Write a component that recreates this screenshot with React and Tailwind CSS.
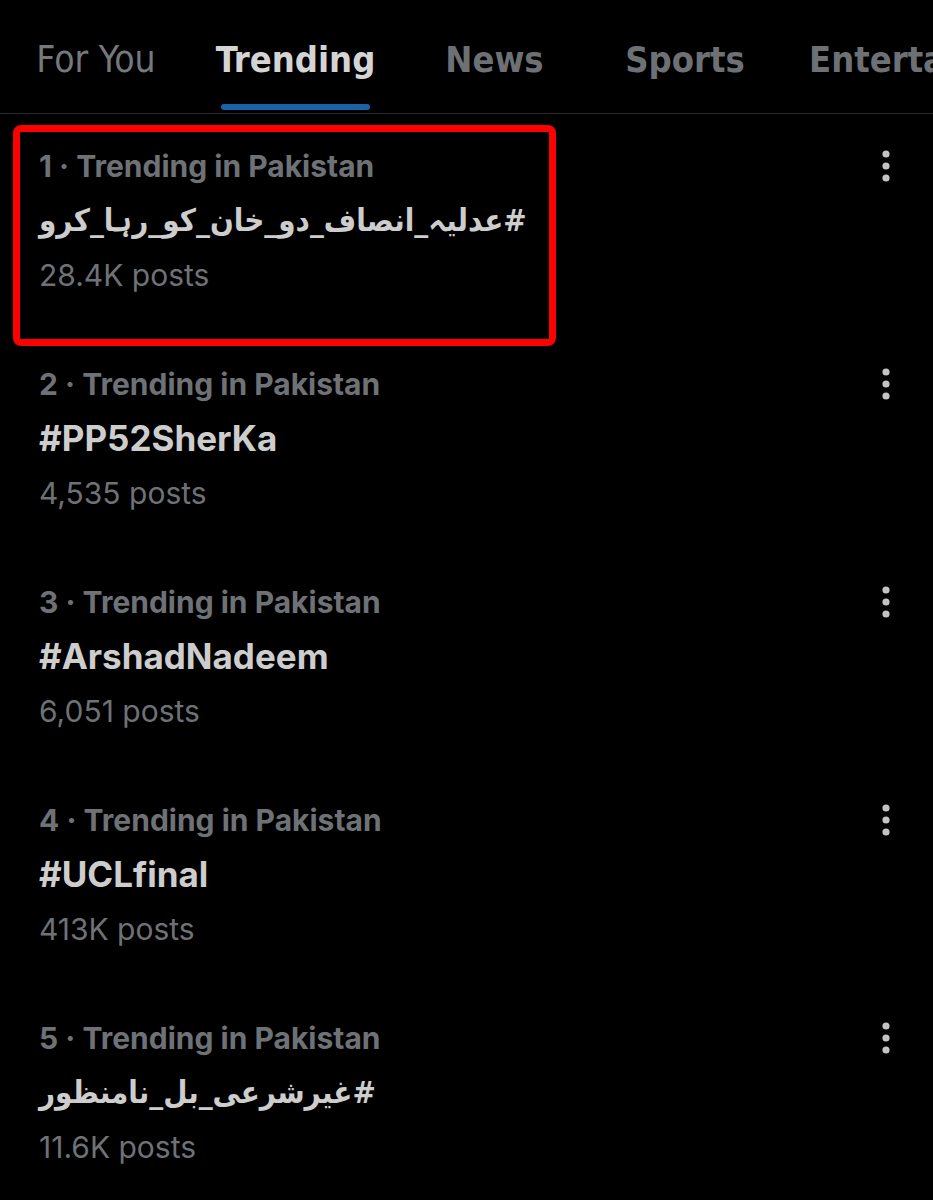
import React from "react";

const rows = [
  { n: 1, tag: "#عدلیہ_انصاف_دو_خان_کو_رہا_کرو", rtl: true, posts: "28.4K posts", boxed: true },
  { n: 2, tag: "#PP52SherKa", posts: "4,535 posts" },
  { n: 3, tag: "#ArshadNadeem", posts: "6,051 posts" },
  { n: 4, tag: "#UCLfinal", posts: "413K posts" },
  { n: 5, tag: "#غیرشرعی_بل_نامنظور", rtl: true, posts: "11.6K posts" },
];

function Dots() {
  return (
    <svg width="14" height="34" viewBox="0 0 14 34" className="text-[#c4c4c4]">
      <circle cx="7" cy="5" r="3.6" fill="currentColor" />
      <circle cx="7" cy="17" r="3.6" fill="currentColor" />
      <circle cx="7" cy="29" r="3.6" fill="currentColor" />
    </svg>
  );
}

export default function App() {
  const condensed = { fontFamily: '"Liberation Sans Narrow", "DejaVu Sans Condensed", "Roboto", sans-serif' };
  return (
    <div className="w-[933px] h-[1200px] bg-black overflow-hidden" style={{ fontFamily: 'Inter, "DejaVu Sans", sans-serif' }}>
      <div className="h-[114px] border-b border-[#2a2d30] flex items-stretch whitespace-nowrap overflow-hidden">
        <div className="w-[192px] shrink-0 flex justify-center pt-[40px] text-[37px] leading-[40px] text-[#75787c]" style={condensed}>For You</div>
        <div className="w-[207px] shrink-0 flex flex-col items-center pt-[40px] text-[36px] leading-[40px] font-bold text-[#d4d4d4]" style={condensed}>
          <span>Trending</span>
          <div className="mt-[24px] w-[149px] h-[6px] rounded-full bg-[#1a63a8]" />
        </div>
        <div className="w-[191px] shrink-0 flex justify-center pt-[40px] text-[36px] leading-[40px] font-bold text-[#6d7175]" style={condensed}>News</div>
        <div className="w-[190px] shrink-0 flex justify-center pt-[40px] text-[36px] leading-[40px] font-bold text-[#6d7175]" style={condensed}>Sports</div>
        <div className="shrink-0 pl-[29px] pt-[40px] text-[36px] leading-[40px] font-bold text-[#6d7175]" style={condensed}>Entertainment</div>
      </div>
      <div className="flex flex-col">
        {rows.map((r) => (
          <div key={r.n} className="relative h-[218px] pt-[25px] pl-[39px] pr-[40px] flex justify-between">
            {r.boxed && (
              <div className="absolute left-[13px] top-[11px] w-[543px] h-[221px] border-[7px] border-[#ff0000] rounded-[8px]" />
            )}
            <div className="flex flex-col items-start">
              <div className="h-[54px] flex items-center text-[30px] font-bold text-[#6e7276]">
                {r.n} · Trending in Pakistan
              </div>
              <div className="h-[55px] flex items-center text-[35px] font-bold text-[#cdcdcd]">
                {r.rtl ? (
                  <span dir="rtl" className="inline-block text-[31px]" style={{ fontFamily: '"DejaVu Sans Condensed", "DejaVu Sans", sans-serif' }}>{r.tag}</span>
                ) : (
                  r.tag
                )}
              </div>
              <div className="h-[55px] flex items-center text-[30px] text-[#6e7276]">{r.posts}</div>
            </div>
            <div className="pt-[10px]">
              <Dots />
            </div>
          </div>
        ))}
      </div>
    </div>
  );
}
